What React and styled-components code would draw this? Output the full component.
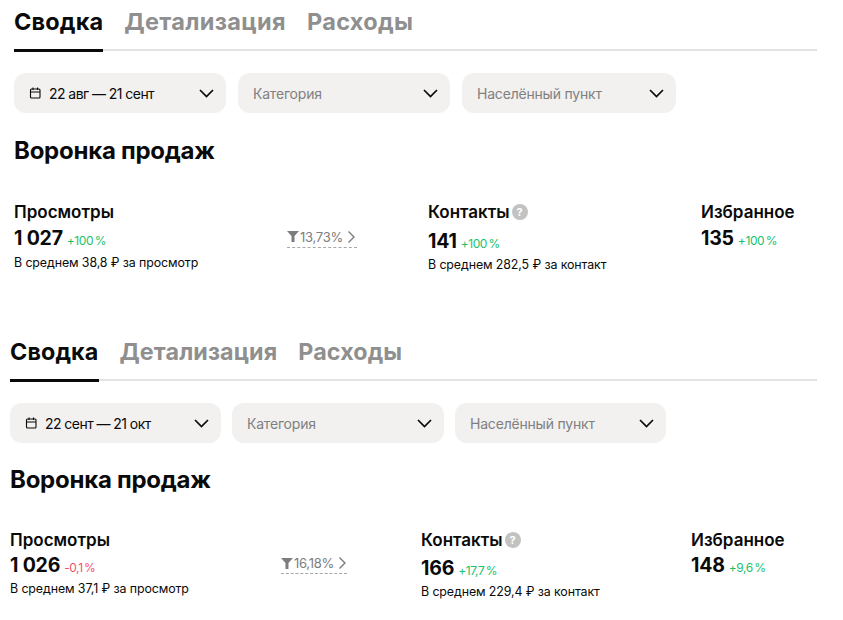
import styled, { createGlobalStyle } from "styled-components"

const GlobalStyle = createGlobalStyle`
body {
  margin: 0;
  background: #fff;
  font-family: Inter, "Liberation Sans", sans-serif;
  color: #0a0a0a;
}
`
const Page = styled.div`
width: 843px;
height: 620px;
overflow: hidden;
`
const Section = styled.section`
margin-left: ${p => p.$left}px;
width: ${p => 817 - p.$left}px;
height: ${p => p.$height}px;
`
const Tabs = styled.div`
display: flex;
gap: ${p => p.$gap}px;
height: 49px;
border-bottom: 2px solid #e3e3e3;
`
const Tab = styled.div`
height: 49px;
font-size: ${p => p.$size}px;
font-weight: 700;
line-height: 44px;
letter-spacing: ${p => (p.$active ? "0.15px" : `${p.$spacing}px`)};
color: ${p => (p.$active ? "#0a0a0a" : "#8f8f8f")};
border-bottom: 3px solid ${p => (p.$active ? "#0a0a0a" : "transparent")};
margin-bottom: -3px;
`
const Filters = styled.div`
display: flex;
gap: ${p => p.$gap}px;
margin-top: 22px;
`
const Select = styled.div`
width: ${p => p.$width}px;
height: 40px;
box-sizing: border-box;
padding: 0 12px 0 15px;
display: flex;
align-items: center;
gap: 8px;
border-radius: 12px;
background: #f2f1f0;
font-size: 14px;
color: ${p => (p.$muted ? "#808080" : "#0a0a0a")};
`
const SelectText = styled.span`
flex: 1;
letter-spacing: ${p => (p.$tight ? "-0.55px" : "-0.2px")};
`
const Title = styled.h2`
margin: ${p => p.$top}px 0 0;
font-size: 24px;
line-height: 32px;
font-weight: 700;
letter-spacing: -0.25px;
`
const Metrics = styled.div`
display: grid;
grid-template-columns: ${p => p.$cols};
margin-top: ${p => p.$top}px;
`
const Metric = styled.div`
display: flex;
flex-direction: column;
`
const MetricHead = styled.div`
display: flex;
align-items: center;
gap: 2px;
height: 22px;
font-size: 17px;
font-weight: 600;
`
const ValueRow = styled.div`
display: flex;
align-items: baseline;
gap: 4px;
margin-top: ${p => p.$top}px;
font-size: 19.5px;
line-height: 26px;
font-weight: 700;
letter-spacing: -0.2px;
`
const Delta = styled.span`
font-size: 12px;
font-weight: 400;
letter-spacing: -0.4px;
word-spacing: -1.5px;
color: ${p => (p.$down ? "#f4506e" : "#1cbf6b")};
`
const Note = styled.div`
margin-top: ${p => p.$top}px;
font-size: 12.4px;
line-height: 16px;
letter-spacing: -0.1px;
`
const Funnel = styled.div`
display: flex;
align-items: center;
justify-self: start;
gap: 1px;
height: ${p => p.$height}px;
margin-top: ${p => p.$top}px;
width: ${p => p.$width}px;
border-bottom: 1px dashed #a8a8a8;
font-size: 13px;
letter-spacing: -0.25px;
color: #7d7d7d;
`
const Help = styled.span`
display: inline-flex;
align-items: center;
justify-content: center;
width: 16px;
height: 16px;
border-radius: 50%;
background: #c2c2c2;
color: #fff;
font-size: 11px;
font-weight: 700;
`

const CalendarIcon = () => (
  <svg width="12" height="12" viewBox="0 0 12 12" fill="none" stroke="#0a0a0a" strokeWidth="1.1">
    <rect x="1.500" y="2" width="9.500" height="9" rx="1" />
    <path d="M1.500 5H11M4 .5V3M8.500 .5V3" />
  </svg>
)
const ChevronDown = () => (
  <svg width="15" height="9" viewBox="0 0 15 9" fill="none" stroke="#0a0a0a" strokeWidth="1.7">
    <path d="M1 1l6.500 6.500L14 1" />
  </svg>
)
const FunnelIcon = () => (
  <svg width="12" height="11" viewBox="0 0 12 11" fill="#7d7d7d">
    <path d="M0 0h12L7.500 5v6h-3V5z" />
  </svg>
)
const ChevronRight = () => (
  <svg width="10" height="14" viewBox="0 0 10 14" fill="none" stroke="#7d7d7d" strokeWidth="1.4" style={{ marginLeft: 2 }}>
    <path d="M2.500 1.500 8 7l-5.500 5.500" />
  </svg>
)

const reports = [
  {
    left: 14, height: 330, tabGap: 21, tabSize: 23.5, tabSpacing: 0.33, filterGap: 12, titleTop: 22, metricsTop: 34,
    cols: "273px 141px 273px auto", widths: [212, 212, 214], funnelWidth: 70, funnelTop: 25, funnelHeight: 21,
    valueTop: 2, contactsTop: 5, noteTop: 1, contactsNoteTop: 0,
    period: "22 авг — 21 сент", views: "1 027", viewsDelta: "+100 %", viewsNote: "В среднем 38,8 ₽ за просмотр",
    ratio: "13,73%", contacts: "141", contactsDelta: "+100 %", contactsNote: "В среднем 282,5 ₽ за контакт",
    favourites: "135", favouritesDelta: "+100 %",
  },
  {
    left: 10, height: 290, tabGap: 21, tabSize: 23.3, tabSpacing: 0.1, filterGap: 11, titleTop: 21, metricsTop: 33,
    cols: "271px 140px 270px auto", widths: [211, 212, 211], funnelWidth: 66, funnelTop: 24, funnelHeight: 20,
    valueTop: 1, contactsTop: 4, noteTop: 0, contactsNoteTop: 0,
    period: "22 сент — 21 окт", views: "1 026", viewsDelta: "-0,1 %", viewsDown: true, viewsNote: "В среднем 37,1 ₽ за просмотр",
    ratio: "16,18%", contacts: "166", contactsDelta: "+17,7 %", contactsNote: "В среднем 229,4 ₽ за контакт",
    favourites: "148", favouritesDelta: "+9,6 %",
  },
]

const Report = ({ data }) => (
  <Section $left={data.left} $height={data.height}>
    <Tabs $gap={data.tabGap}>
      <Tab $active $size={data.tabSize}>Сводка</Tab>
      <Tab $size={data.tabSize} $spacing={data.tabSpacing}>Детализация</Tab>
      <Tab $size={data.tabSize} $spacing={data.tabSpacing}>Расходы</Tab>
    </Tabs>
    <Filters $gap={data.filterGap}>
      <Select $width={data.widths[0]}>
        <CalendarIcon />
        <SelectText $tight>{data.period}</SelectText>
        <ChevronDown />
      </Select>
      <Select $width={data.widths[1]} $muted>
        <SelectText>Категория</SelectText>
        <ChevronDown />
      </Select>
      <Select $width={data.widths[2]} $muted>
        <SelectText>Населённый пункт</SelectText>
        <ChevronDown />
      </Select>
    </Filters>
    <Title $top={data.titleTop}>Воронка продаж</Title>
    <Metrics $cols={data.cols} $top={data.metricsTop}>
      <Metric>
        <MetricHead>Просмотры</MetricHead>
        <ValueRow $top={data.valueTop}>{data.views}<Delta $down={data.viewsDown}>{data.viewsDelta}</Delta></ValueRow>
        <Note $top={data.noteTop}>{data.viewsNote}</Note>
      </Metric>
      <Funnel $top={data.funnelTop} $height={data.funnelHeight} $width={data.funnelWidth}>
        <FunnelIcon />{data.ratio}<ChevronRight />
      </Funnel>
      <Metric>
        <MetricHead>Контакты<Help>?</Help></MetricHead>
        <ValueRow $top={data.contactsTop}>{data.contacts}<Delta>{data.contactsDelta}</Delta></ValueRow>
        <Note $top={data.contactsNoteTop}>{data.contactsNote}</Note>
      </Metric>
      <Metric>
        <MetricHead>Избранное</MetricHead>
        <ValueRow $top={data.valueTop}>{data.favourites}<Delta>{data.favouritesDelta}</Delta></ValueRow>
      </Metric>
    </Metrics>
  </Section>
)

const App = () => (
  <Page>
    <GlobalStyle />
    {reports.map(r => <Report key={r.left} data={r} />)}
  </Page>
)

export default App
